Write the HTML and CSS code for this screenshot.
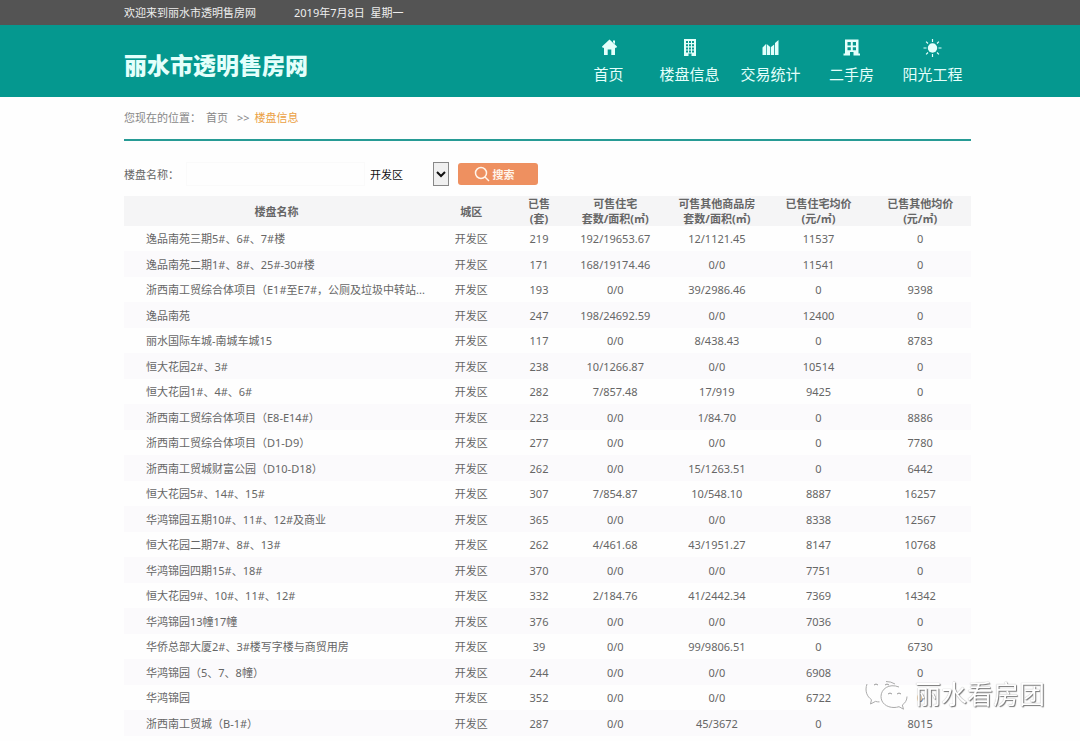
FILE: index.html
```html
<!DOCTYPE html>
<html lang="zh-CN">
<head>
<meta charset="utf-8">
<title>丽水市透明售房网</title>
<link rel="stylesheet" href="styles.css">
</head>
<body>
<div class="topbar"><span>欢迎来到丽水市透明售房网</span><span>2019年7月8日&nbsp; 星期一</span></div>
<header class="header">
  <h1 class="logo">丽水市透明售房网</h1>
  <nav class="nav">
    <a href="#"><svg viewBox="0 0 20 20"><path d="M10.500 1.500 18 8.500 17 10.300 16 9.600V17H12.300V11.500H8.700V17H5V9.600L4 10.300 3 8.500ZM14 2.500H16V6L14 4.200Z"/></svg>首页</a>
    <a href="#"><svg viewBox="0 0 20 20"><path fill-rule="evenodd" d="M4 1H16V18H11.500V15.500H8.500V18H4ZM6 3V5H8V3ZM9 3V5H11V3ZM12 3V5H14V3ZM6 6.200V8.200H8V6.200ZM9 6.200V8.200H11V6.200ZM12 6.200V8.200H14V6.200ZM6 9.400V11.400H8V9.400ZM9 9.400V11.400H11V9.400ZM12 9.400V11.400H14V9.400ZM6 12.500V14.500H8V12.500ZM9 12.500V14.500H11V12.500ZM12 12.500V14.500H14V12.500Z"/></svg>楼盘信息</a>
    <a href="#"><svg viewBox="0 0 20 20"><path d="M1.500 17V9.500L5 6V17ZM5.700 17V6L9.200 9V17ZM10 17V9L13.200 6.500V17ZM14 17V5L17.500 2V17Z"/></svg>交易统计</a>
    <a href="#"><svg viewBox="0 0 20 20"><path fill-rule="evenodd" d="M3 1.500H16.500V15.500H18V17.500H11.500V14H8V17.500H1.500V15.500H3ZM5.500 4V7.500H8.800V4ZM10.800 4V7.500H14V4ZM5.500 9.300V12.300H8.800V9.300ZM10.800 9.300V12.300H14V9.300Z"/></svg>二手房</a>
    <a href="#"><svg viewBox="0 0 20 20"><circle cx="9.500" cy="10" r="4.700"/><path class="rays" d="M9.500 1V4M9.500 16V19M.5 10H3.500M15.500 10H18.500M3.100 3.600 5 5.500M14 14.500 15.900 16.400M3.100 16.400 5 14.500M14 5.500 15.900 3.600"/></svg>阳光工程</a>
  </nav>
</header>
<main class="main">
  <div class="crumbs"><span>您现在的位置：</span><a href="#">首页</a><span class="sep">&gt;&gt;</span><a class="current" href="#">楼盘信息</a></div>
  <form class="search">
    <label for="name">楼盘名称：</label>
    <input id="name" type="text">
    <div class="picker">
      <select aria-label="城区"><option>开发区</option></select>
      <svg viewBox="0 0 16 24"><rect x=".5" y=".5" width="15" height="23"/><path d="m4 10 4 4 4-4"/></svg>
    </div>
    <button type="button"><svg viewBox="0 0 16 16"><circle cx="7" cy="7" r="5.500"/><path d="m11 11 4 4"/></svg>搜索</button>
  </form>
  <table>
    <colgroup><col class="c-name"><col class="c-area"><col class="c-sold"><col class="c-num"><col class="c-num"><col class="c-num"><col class="c-num"></colgroup>
    <thead><tr><th>楼盘名称</th><th>城区</th><th>已售<br>(套)</th><th>可售住宅<br>套数/面积(㎡)</th><th>可售其他商品房<br>套数/面积(㎡)</th><th>已售住宅均价<br>(元/㎡)</th><th>已售其他均价<br>(元/㎡)</th></tr></thead>
    <tbody>
      <tr><td>逸品南苑三期5#、6#、7#楼</td><td>开发区</td><td>219</td><td>192/19653.67</td><td>12/1121.45</td><td>11537</td><td>0</td></tr>
      <tr><td>逸品南苑二期1#、8#、25#-30#楼</td><td>开发区</td><td>171</td><td>168/19174.46</td><td>0/0</td><td>11541</td><td>0</td></tr>
      <tr><td>浙西南工贸综合体项目（E1#至E7#，公厕及垃圾中转站...</td><td>开发区</td><td>193</td><td>0/0</td><td>39/2986.46</td><td>0</td><td>9398</td></tr>
      <tr><td>逸品南苑</td><td>开发区</td><td>247</td><td>198/24692.59</td><td>0/0</td><td>12400</td><td>0</td></tr>
      <tr><td>丽水国际车城-南城车城15</td><td>开发区</td><td>117</td><td>0/0</td><td>8/438.43</td><td>0</td><td>8783</td></tr>
      <tr><td>恒大花园2#、3#</td><td>开发区</td><td>238</td><td>10/1266.87</td><td>0/0</td><td>10514</td><td>0</td></tr>
      <tr><td>恒大花园1#、4#、6#</td><td>开发区</td><td>282</td><td>7/857.48</td><td>17/919</td><td>9425</td><td>0</td></tr>
      <tr><td>浙西南工贸综合体项目（E8-E14#）</td><td>开发区</td><td>223</td><td>0/0</td><td>1/84.70</td><td>0</td><td>8886</td></tr>
      <tr><td>浙西南工贸综合体项目（D1-D9）</td><td>开发区</td><td>277</td><td>0/0</td><td>0/0</td><td>0</td><td>7780</td></tr>
      <tr><td>浙西南工贸城财富公园（D10-D18）</td><td>开发区</td><td>262</td><td>0/0</td><td>15/1263.51</td><td>0</td><td>6442</td></tr>
      <tr><td>恒大花园5#、14#、15#</td><td>开发区</td><td>307</td><td>7/854.87</td><td>10/548.10</td><td>8887</td><td>16257</td></tr>
      <tr><td>华鸿锦园五期10#、11#、12#及商业</td><td>开发区</td><td>365</td><td>0/0</td><td>0/0</td><td>8338</td><td>12567</td></tr>
      <tr><td>恒大花园二期7#、8#、13#</td><td>开发区</td><td>262</td><td>4/461.68</td><td>43/1951.27</td><td>8147</td><td>10768</td></tr>
      <tr><td>华鸿锦园四期15#、18#</td><td>开发区</td><td>370</td><td>0/0</td><td>0/0</td><td>7751</td><td>0</td></tr>
      <tr><td>恒大花园9#、10#、11#、12#</td><td>开发区</td><td>332</td><td>2/184.76</td><td>41/2442.34</td><td>7369</td><td>14342</td></tr>
      <tr><td>华鸿锦园13幢17幢</td><td>开发区</td><td>376</td><td>0/0</td><td>0/0</td><td>7036</td><td>0</td></tr>
      <tr><td>华侨总部大厦2#、3#楼写字楼与商贸用房</td><td>开发区</td><td>39</td><td>0/0</td><td>99/9806.51</td><td>0</td><td>6730</td></tr>
      <tr><td>华鸿锦园（5、7、8幢）</td><td>开发区</td><td>244</td><td>0/0</td><td>0/0</td><td>6908</td><td>0</td></tr>
      <tr><td>华鸿锦园</td><td>开发区</td><td>352</td><td>0/0</td><td>0/0</td><td>6722</td><td>0</td></tr>
      <tr><td>浙西南工贸城（B-1#）</td><td>开发区</td><td>287</td><td>0/0</td><td>45/3672</td><td>0</td><td>8015</td></tr>
    </tbody>
  </table>
</main>
<div class="watermark">
  <svg viewBox="0 0 44 34"><path class="bubble" d="M2 7C-.5 14 2 19.500 6.500 22.700L5.500 27l5-2.600q2 .6 4 .5M21 4.500q5 0 9 2.500"/><path class="bubble" d="M34 10c-10-4-18 2-18 9.500 0 6.500 5.500 11 13 11 1.800 0 3.200-.3 5-.8l4.500 2.500-1.200-4.200c3-2 4.700-5 4.700-8.500"/><path class="eyes" d="M9 8q2-2 4 0M20 8q2-2 4 0M23 17q2-2 4 0M32 17q2-2 4 0"/></svg>
  <span>丽水看房团</span>
</div>
</body>
</html>
```
FILE: styles.css
```css
* { box-sizing: border-box; }
body {
  margin: 0;
  background: #fefefe;
  color: #666;
  font: 11px/15px "Noto Sans", "Noto Sans CJK SC", sans-serif;
}
a { color: inherit; text-decoration: none; }
.topbar {
  display: flex;
  gap: 38px;
  padding: 0 109px 0 124px;
  background: #545454;
  color: #eee;
  line-height: 25px;
}
.header {
  display: flex;
  justify-content: space-between;
  padding: 0 107px 0 124px;
  background: #05988f;
  color: #e4fffb;
}
.logo {
  margin: 0;
  padding-top: 22px;
  font: 900 23px/34px "Noto Sans CJK SC", sans-serif;
}
.nav { display: flex; }
.nav a {
  display: flex;
  flex-direction: column;
  align-items: center;
  gap: 5px;
  width: 81px;
  padding: 13px 0 12px;
  font-size: 15px;
  line-height: 22px;
}
.nav svg { width: 20px; height: 20px; fill: currentColor; }
.rays { stroke: currentColor; stroke-width: 1.2; }
.main { padding: 0 109px 0 124px; }
.crumbs {
  display: flex;
  padding: 13px 0 14px;
  border-bottom: 2px solid #279b95;
  color: #888;
}
.crumbs a { margin-left: 5px; }
.crumbs .sep { margin-left: 9px; }
.crumbs .current { color: #eba144; }
.search {
  display: flex;
  align-items: center;
  padding: 21px 0 10px;
}
.search label { width: 62px; }
.search input {
  width: 179px;
  height: 24px;
  border: 1px solid #fafafa;
  background: #fefefe;
}
.picker { position: relative; width: 84px; height: 24px; }
.picker select {
  width: 100%;
  height: 100%;
  padding: 0 5px;
  border: 0;
  background: transparent;
  color: #111;
  font: inherit;
  appearance: none;
}
.picker svg {
  position: absolute;
  top: 0;
  right: 0;
  width: 16px;
  height: 24px;
  fill: #f0f0f0;
  stroke: #888;
  pointer-events: none;
}
.picker path { fill: none; stroke: #111; stroke-width: 2; }
.search button {
  display: flex;
  align-items: center;
  justify-content: center;
  gap: 3px;
  width: 80px;
  height: 22px;
  margin-left: 9px;
  padding: 0 8px 0 0;
  border: 0;
  border-radius: 3px;
  background: #ee9060;
  color: #fff4ea;
  font: inherit;
  font-weight: bold;
}
.search button svg {
  width: 16px;
  height: 16px;
  fill: none;
  stroke: currentColor;
  stroke-width: 1.5;
}
table {
  width: 100%;
  table-layout: fixed;
  border-collapse: collapse;
  text-align: center;
}
.c-name { width: 36%; }
.c-area { width: 10%; }
.c-sold { width: 6%; }
.c-num { width: 12%; }
th, td { padding: 0; white-space: nowrap; }
th { background: #f5f5f6; font-weight: bold; }
td { height: 25px; }
td:first-child { padding-left: 22px; text-align: left; }
tr:nth-child(even) td { height: 26px; background: #fbfafc; }
.watermark {
  position: fixed;
  right: 35px;
  bottom: 28px;
  display: flex;
  align-items: center;
  gap: 6px;
  color: #fff;
  font-size: 26px;
  line-height: 38px;
  text-shadow: 1px 1px 1px #777, 0 0 1px #999;
}
.watermark svg { width: 44px; height: 34px; }
.bubble { fill: #fefefe; stroke: #aaa; }
.eyes { fill: none; stroke: #999; }
```
